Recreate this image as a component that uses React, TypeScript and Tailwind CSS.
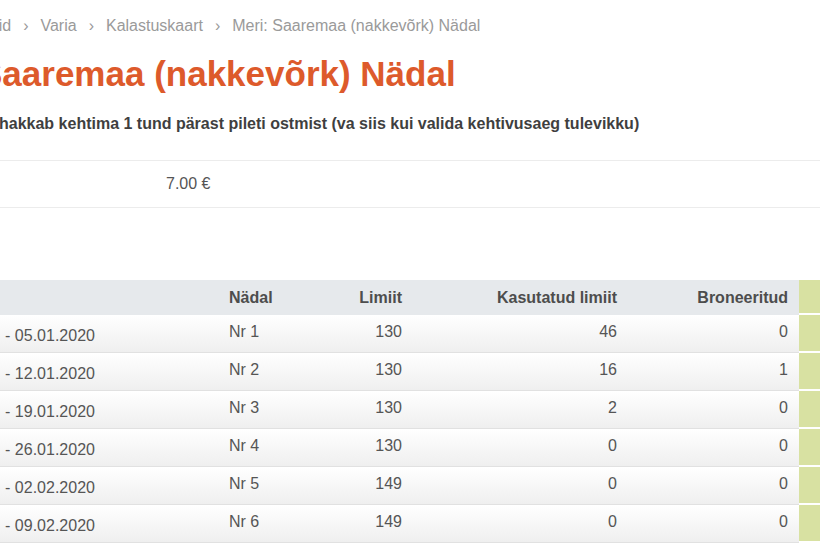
import React from "react";

const rows: [string, string, string, string, string, string][] = [
  ["30.12.2019", "05.01.2020", "Nr 1", "130", "46", "0"],
  ["06.01.2020", "12.01.2020", "Nr 2", "130", "16", "1"],
  ["13.01.2020", "19.01.2020", "Nr 3", "130", "2", "0"],
  ["20.01.2020", "26.01.2020", "Nr 4", "130", "0", "0"],
  ["27.01.2020", "02.02.2020", "Nr 5", "149", "0", "0"],
  ["03.02.2020", "09.02.2020", "Nr 6", "149", "0", "0"],
];

export default function App() {
  return (
    <div
      className="w-[820px] h-[548px] overflow-hidden bg-white text-[16px] leading-[20px] text-[#555]"
      style={{ fontFamily: '"Liberation Sans", Arial, sans-serif' }}
    >
      {/* breadcrumb */}
      <div className="pt-[16px] ml-[-44px] flex whitespace-nowrap text-[#9a9a9a]">
        <span>Kaardid</span>
        <span className="mx-[12px]">›</span>
        <span>Varia</span>
        <span className="mx-[12px]">›</span>
        <span>Kalastuskaart</span>
        <span className="mx-[12px]">›</span>
        <span>Meri: Saaremaa (nakkevõrk) Nädal</span>
      </div>

      {/* title */}
      <h1 className="mt-[18px] ml-[-21px] whitespace-nowrap text-[35px] leading-[40px] font-bold text-[#dd5a2b]">
        Saaremaa (nakkevõrk) Nädal
      </h1>

      {/* subtitle */}
      <p className="mt-[20px] ml-[-1px] whitespace-nowrap font-bold text-[#3f3f3f]">
        hakkab kehtima 1 tund pärast pileti ostmist (va siis kui valida kehtivusaeg tulevikku)
      </p>

      {/* price row */}
      <div className="mt-[26px] border-t border-b border-[#ececec] py-[13px] flex">
        <div className="w-[166px]" />
        <div>7.00 €</div>
      </div>

      {/* table */}
      <div className="mt-[72px] ml-[-90px] w-[1000px]">
        <div className="flex h-[35px] font-bold text-[#4d4d4d]">
          <div className="flex bg-[#e6e9ec] pt-[8px]">
            <div className="w-[309px]" />
            <div className="w-[111px] pl-[10px]">Nädal</div>
            <div className="w-[82px] pr-[10px] text-right">Limiit</div>
            <div className="w-[215px] pr-[10px] text-right">Kasutatud limiit</div>
            <div className="w-[172px] pr-[11px] text-right">Broneeritud</div>
          </div>
          <div className="w-[80px] bg-[#d8e1a2] border-b-2 border-white" />
        </div>
        {rows.map((r, i) => (
          <div key={i} className="flex h-[38px]">
            <div className="flex bg-linear-to-b from-white to-[#efefef] border-b border-[#e1e1e1]">
              <div className="w-[309px] pl-[8px] pt-[11px] whitespace-nowrap">
                <span>{r[0]}</span>
                <span className="ml-[7px]">- {r[1]}</span>
              </div>
              <div className="w-[111px] pl-[10px] pt-[7px]">{r[2]}</div>
              <div className="w-[82px] pr-[10px] pt-[7px] text-right">{r[3]}</div>
              <div className="w-[215px] pr-[10px] pt-[7px] text-right">{r[4]}</div>
              <div className="w-[172px] pr-[11px] pt-[7px] text-right">{r[5]}</div>
            </div>
            <div className="w-[80px] bg-[#d8e1a2] border-b-2 border-white" />
          </div>
        ))}
      </div>
    </div>
  );
}
